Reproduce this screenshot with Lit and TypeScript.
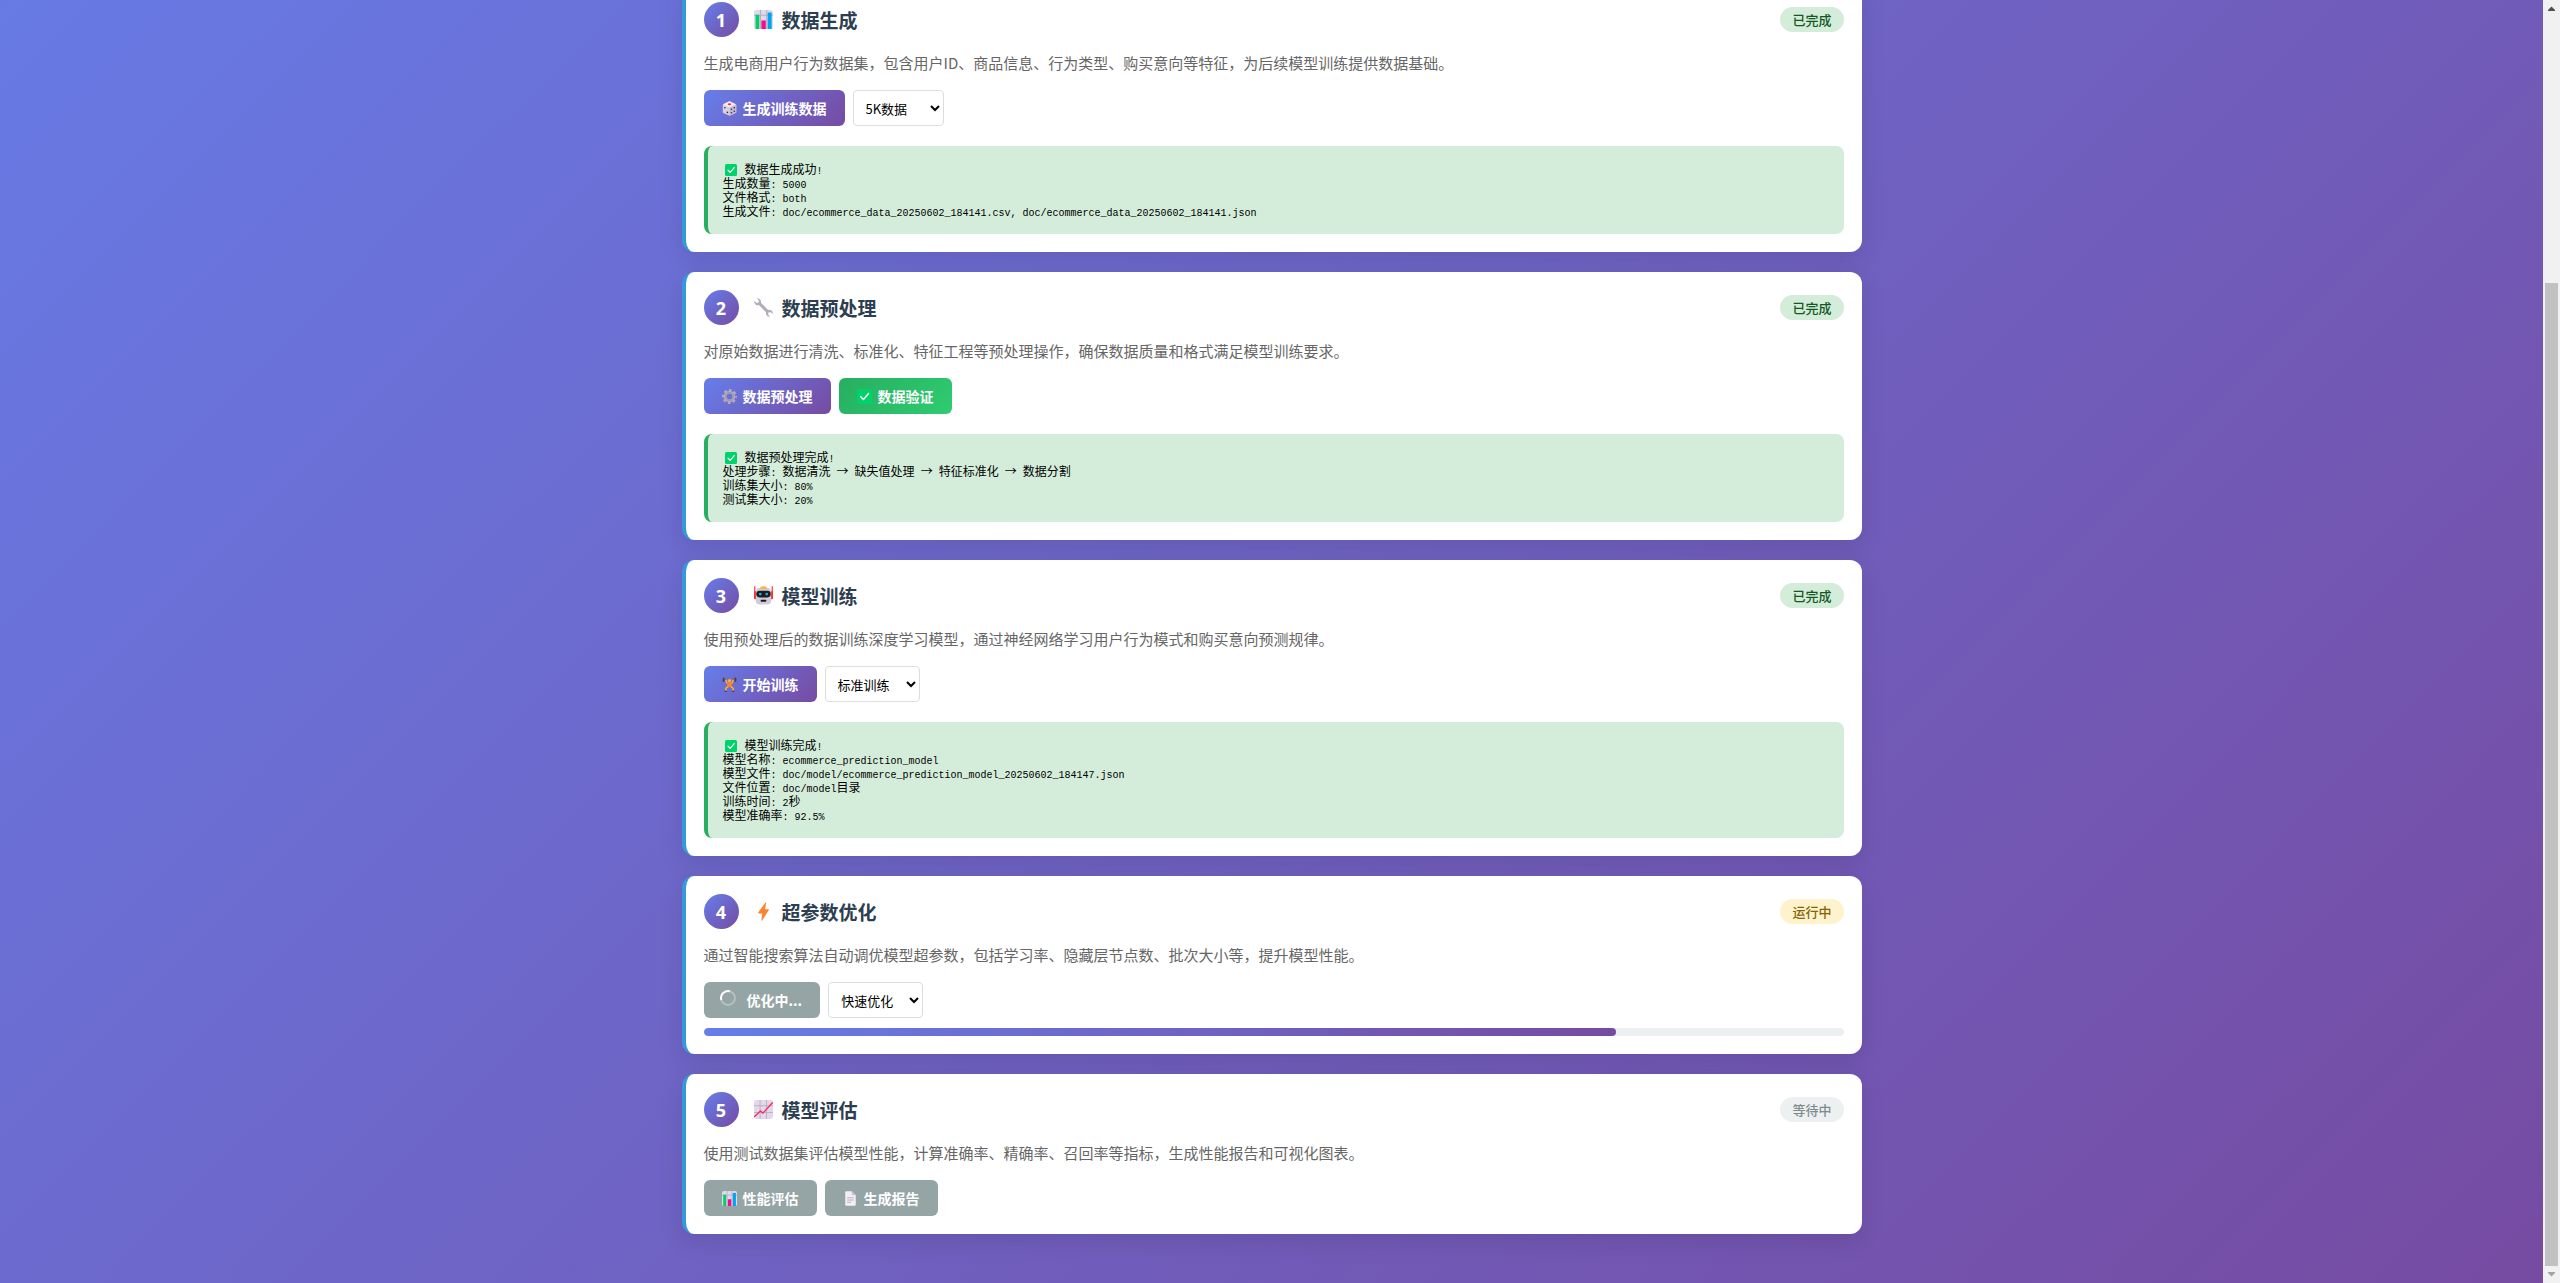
import { LitElement, html, css, svg, nothing, TemplateResult } from "lit";
import { customElement, property } from "lit/decorators.js";

type IconName = "bars" | "wrench" | "robot" | "bolt" | "trend" | "dice" | "gear" | "check" | "lifter" | "page" | "spinner";
type Status = "completed" | "running" | "waiting";

interface Action {
  label: string;
  icon: IconName;
  kind?: "primary" | "success";
  disabled?: boolean;
}

interface Step {
  title: string;
  icon: IconName;
  status: Status;
  desc: string;
  actions: Action[];
  select?: { label: string; value: string; options: string[] };
  output?: string[];
  progress?: number;
}

const STATUS_TEXT: Record<Status, string> = {
  completed: "已完成",
  running: "运行中",
  waiting: "等待中",
};

const STEPS: Step[] = [
  {
    title: "数据生成",
    icon: "bars",
    status: "completed",
    desc: "生成电商用户行为数据集，包含用户ID、商品信息、行为类型、购买意向等特征，为后续模型训练提供数据基础。",
    actions: [{ label: "生成训练数据", icon: "dice" }],
    select: { label: "数据规模", value: "5K数据", options: ["1K数据", "5K数据", "10K数据"] },
    output: [
      "数据生成成功!",
      "生成数量: 5000",
      "文件格式: both",
      "生成文件: doc/ecommerce_data_20250602_184141.csv, doc/ecommerce_data_20250602_184141.json",
    ],
  },
  {
    title: "数据预处理",
    icon: "wrench",
    status: "completed",
    desc: "对原始数据进行清洗、标准化、特征工程等预处理操作，确保数据质量和格式满足模型训练要求。",
    actions: [
      { label: "数据预处理", icon: "gear" },
      { label: "数据验证", icon: "check", kind: "success" },
    ],
    output: [
      "数据预处理完成!",
      "处理步骤: 数据清洗 → 缺失值处理 → 特征标准化 → 数据分割",
      "训练集大小: 80%",
      "测试集大小: 20%",
    ],
  },
  {
    title: "模型训练",
    icon: "robot",
    status: "completed",
    desc: "使用预处理后的数据训练深度学习模型，通过神经网络学习用户行为模式和购买意向预测规律。",
    actions: [{ label: "开始训练", icon: "lifter" }],
    select: { label: "训练模式", value: "标准训练", options: ["快速训练", "标准训练", "深度训练"] },
    output: [
      "模型训练完成!",
      "模型名称: ecommerce_prediction_model",
      "模型文件: doc/model/ecommerce_prediction_model_20250602_184147.json",
      "文件位置: doc/model目录",
      "训练时间: 2秒",
      "模型准确率: 92.5%",
    ],
  },
  {
    title: "超参数优化",
    icon: "bolt",
    status: "running",
    desc: "通过智能搜索算法自动调优模型超参数，包括学习率、隐藏层节点数、批次大小等，提升模型性能。",
    actions: [{ label: "优化中...", icon: "spinner", disabled: true }],
    select: { label: "优化模式", value: "快速优化", options: ["快速优化", "标准优化", "深度优化"] },
    progress: 80,
  },
  {
    title: "模型评估",
    icon: "trend",
    status: "waiting",
    desc: "使用测试数据集评估模型性能，计算准确率、精确率、召回率等指标，生成性能报告和可视化图表。",
    actions: [
      { label: "性能评估", icon: "bars", disabled: true },
      { label: "生成报告", icon: "page", disabled: true },
    ],
  },
];

const ICONS: Record<IconName, TemplateResult> = {
  bars: svg`
    <rect width="20" height="20" rx="2.5" fill="#e1d8ec"/>
    <path d="M0 5.5H20M6.8 0V20M13.4 0V20" stroke="#b4acbc" stroke-width="1" fill="none"/>
    <rect x="1.6" y="5" width="4" height="15" fill="#00d26a"/>
    <rect x="7.8" y="11" width="4.6" height="9" fill="#f70a8d"/>
    <rect x="14.4" y="2.6" width="4.2" height="17.4" fill="#00a6ed"/>`,
  wrench: svg`
    <path d="M5.6 5.6L14.6 14.6" stroke="#b4acbc" stroke-width="3.2"/>
    <path d="M3 .3Q6.400 .2 7.400 3Q8 5.600 6 7.200Q3.600 8.400 1.400 6.800Q0 5.400 .2 3.200L2.800 5.200L5 4.600V2.600Z" fill="#b4acbc"/>
    <path d="M17 19.700Q13.600 19.800 12.600 17Q12 14.400 14 12.800Q16.400 11.600 18.600 13.200Q20 14.600 19.800 16.800L17.200 14.800L15 15.400V17.400Z" fill="#b4acbc"/>`,
  robot: svg`
    <path d="M.8 .2V12M19.2 .2V12" stroke="#f8312f" stroke-width="1.2"/>
    <rect x="0" y="5.5" width="3" height="8.5" rx="1" fill="#f8312f"/>
    <rect x="17" y="5.5" width="3" height="8.5" rx="1" fill="#f8312f"/>
    <rect x="2" y="2" width="16" height="17.6" rx="4" fill="#d3c9dd"/>
    <path d="M6 2.800Q6.600 .2 10 .2T14 2.800Z" fill="#ffb02e"/>
    <rect x="2.4" y="5" width="15.2" height="7" rx="3.5" fill="#1c1c1c"/>
    <circle cx="6.6" cy="8.5" r="1.500" fill="#26a9dc"/>
    <circle cx="13.4" cy="8.5" r="1.500" fill="#26a9dc"/>
    <rect x="7" y="14.6" width="6" height="2" rx=".8" fill="#1c1c1c"/>`,
  bolt: svg`<path d="M12.2 .4Q12.8 .3 12.7 1L11.7 7.6H15Q16 7.8 15.5 8.8L8.6 19.4Q8 20 7.8 19.2L8.7 12H5Q4.200 11.700 4.600 10.800Z" fill="#ff822d"/>`,
  trend: svg`
    <rect width="20" height="20" rx="2.500" fill="#e1d8ec"/>
    <path d="M0 6H20M0 13.200H20M6.400 0V20M13.200 0V20" stroke="#b4acbc" stroke-width=".9" fill="none"/>
    <path d="M.6 17.400L6.800 11.600L9.400 13.800L19.400 3" stroke="#fb2b63" stroke-width="1.500" fill="none" stroke-linejoin="round" stroke-linecap="round"/>`,
  dice: svg`
    <path d="M10 .4L18.400 4.200Q19 4.600 19 5.400V14.600Q19 15.600 18.200 16L10 19.800L1.800 16Q1 15.600 1 14.600V5.400Q1 4.600 1.600 4.200Z" fill="#d8cfe0"/>
    <path d="M10 .4L18.400 4.400L10 8.600L1.600 4.400Z" fill="#f3eef8"/>
    <path d="M19 5V14.600Q19 15.600 18.200 16L10 19.800V8.600Z" fill="#c4b9ce"/>
    <ellipse cx="10" cy="4.400" rx="2.400" ry="1.300" fill="#f8312f"/>
    <circle cx="3.800" cy="9" r="1.100" fill="#3b2a50"/><circle cx="7.200" cy="15.200" r="1.100" fill="#3b2a50"/>
    <circle cx="12.600" cy="11" r="1.100" fill="#3b2a50"/><circle cx="16.400" cy="9" r="1.100" fill="#3b2a50"/>
    <circle cx="12.600" cy="15.600" r="1.100" fill="#3b2a50"/><circle cx="16.400" cy="13.600" r="1.100" fill="#3b2a50"/>`,
  gear: svg`
    <circle cx="10" cy="10" r="5.800" fill="none" stroke="#b4acbc" stroke-width="3.800"/>
    <circle cx="10" cy="10" r="8.600" fill="none" stroke="#b4acbc" stroke-width="2.600" stroke-dasharray="3.700 3.054" stroke-dashoffset="1.850"/>
    <circle cx="10" cy="10" r="5.400" fill="none" stroke="#998ea4" stroke-width="1"/>`,
  check: svg`
    <rect width="20" height="20" rx="2.500" fill="#00d26a"/>
    <path d="M5 10.200L8.600 14L15.400 6" stroke="#fff" stroke-width="2" fill="none" stroke-linecap="round" stroke-linejoin="round"/>`,
  lifter: svg`
    <path d="M0 3.500H20" stroke="#7d7385" stroke-width="1"/>
    <rect x="1" y=".6" width="1.800" height="6" rx=".8" fill="#4a3b50"/><rect x="3" y="1.400" width="1.400" height="4.600" fill="#5c4b63"/>
    <rect x="17.200" y=".6" width="1.800" height="6" rx=".8" fill="#4a3b50"/><rect x="15.600" y="1.400" width="1.400" height="4.600" fill="#5c4b63"/>
    <path d="M5 3.600L6.600 8L10 9L13.400 8L15 3.600" fill="none" stroke="#ffb02e" stroke-width="2" stroke-linejoin="round"/>
    <circle cx="10" cy="4.800" r="2.300" fill="#ffb02e"/>
    <path d="M6.600 7.400H13.400L12.800 13.800H7.200Z" fill="#ff822d"/>
    <path d="M7.800 12.800L4.800 15.200L5.800 18.400M12.200 12.800L15.200 15.200L14.200 18.400" fill="none" stroke="#ffb02e" stroke-width="2"/>
    <path d="M3.600 19.200H6.600M13.400 19.200H16.400" stroke="#4a3b50" stroke-width="1.500"/>`,
  page: svg`
    <path d="M3 1.500Q3 .4 4.200 .4H11.600L17 5.800V18.500Q17 19.600 15.800 19.600H4.200Q3 19.600 3 18.500Z" fill="#f3eef8"/>
    <path d="M11.600 .4L17 5.800H12.600Q11.600 5.800 11.600 4.800Z" fill="#cdc4d6"/>
    <path d="M5.600 9H14.400M5.600 12H14.400M5.600 15H11" stroke="#b4acbc" stroke-width="1.200"/>`,
  spinner: svg`
    <circle cx="10" cy="10" r="8.700" fill="none" stroke="#fff" stroke-opacity=".3" stroke-width="2.400"/>
    <path d="M1.700 12.600A8.700 8.700 0 0 1 12.200 1.600" fill="none" stroke="#fff" stroke-width="2.400"/>`,
};

const icon = (name: IconName) => html`<svg class="icon icon-${name}" viewBox="0 0 20 20" aria-hidden="true">${ICONS[name]}</svg>`;

/** Half-width characters take a smaller monospace so that two of them span one ideograph. */
const mixed = (line: string) =>
  (line.match(/[\x20-\x7e]+|[^\x20-\x7e]+/g) ?? []).map((run) =>
    /^[\x20-\x7e]/.test(run) ? html`<span class="half">${run}</span>` : run
  );

@customElement("step-card")
export class StepCard extends LitElement {
  @property({ attribute: false }) step!: Step;
  @property({ type: Number }) index = 1;

  static styles = css`
    :host {
      display: block;
      flex: none;
      padding: 18px;
      border-left: 4px solid #3498db;
      border-radius: 12px;
      background: #fff;
      box-shadow: 0 8px 25px rgba(0, 0, 0, 0.1);
    }
    .head {
      display: flex;
      align-items: center;
      gap: 15px;
      margin-bottom: 14px;
    }
    .number {
      display: grid;
      place-items: center;
      width: 35px;
      height: 35px;
      border-radius: 50%;
      color: #fff;
      font: bold 18px/1 "Noto Sans", sans-serif;
      background: linear-gradient(135deg, #667eea, #764ba2);
    }
    .title {
      display: flex;
      align-items: center;
      gap: 9px;
      flex: 1;
      margin: 0;
      color: #2c3e50;
      font-size: 19px;
      line-height: 26px;
      font-weight: 700;
    }
    .icon {
      flex: none;
      display: block;
      width: 15px;
      height: 15px;
    }
    .title .icon {
      width: 19px;
      height: 19px;
    }
    .status {
      padding: 0 12px;
      border-radius: 15px;
      font-size: 13px;
      line-height: 25px;
      font-weight: 500;
    }
    .completed { background: #d4edda; color: #155724; }
    .running { background: #fff3cd; color: #856404; }
    .waiting { background: #ecf0f1; color: #7f8c8d; }
    .desc {
      margin: 0 0 16px;
      color: #666;
      font-size: 15px;
      line-height: 23px;
    }
    .actions {
      display: flex;
      flex-wrap: wrap;
      gap: 8px;
    }
    button {
      display: flex;
      align-items: center;
      gap: 6px;
      height: 36px;
      padding: 0 18px;
      border: 0;
      border-radius: 6px;
      color: #fff;
      font-family: inherit;
      font-size: 14px;
      font-weight: 700;
      cursor: pointer;
      background: linear-gradient(135deg, #667eea, #764ba2);
    }
    button.success { background: linear-gradient(135deg, #27ae60, #2ecc71); }
    button:disabled { background: #95a5a6; cursor: not-allowed; }
    button .icon-spinner {
      width: 16px;
      height: 16px;
      margin: 0 5px 4px -2px;
    }
    select {
      height: 36px;
      padding: 0 12px 0 8px;
      border: 1px solid #ddd;
      border-radius: 4px;
      color: #000;
      background: #fff;
      font-family: inherit;
      font-size: 13px;
    }
    .output {
      margin-top: 20px;
      padding: 16px 15px;
      border-left: 4px solid #27ae60;
      border-radius: 8px;
      background: #d4edda;
      color: #000;
      font-size: 12px;
      line-height: 14px;
    }
    .line { white-space: pre-wrap; height: 14px; }
    .line .icon {
      display: inline-block;
      width: 12px;
      height: 12px;
      margin: 0 2px;
      vertical-align: -2px;
    }
    .half {
      font-family: "Liberation Mono", monospace;
      font-size: 10px;
    }
    .track {
      height: 8px;
      margin-top: 10px;
      border-radius: 4px;
      overflow: hidden;
      background: #ecf0f1;
    }
    .fill {
      height: 100%;
      border-radius: 4px;
      background: linear-gradient(90deg, #667eea, #764ba2);
    }
  `;

  render() {
    const s = this.step;
    return html`
      <div class="head">
        <div class="number">${this.index}</div>
        <h3 class="title">${icon(s.icon)}<span>${s.title}</span></h3>
        <div class="status ${s.status}">${STATUS_TEXT[s.status]}</div>
      </div>
      <p class="desc">${s.desc}</p>
      <div class="actions">
        ${s.actions.map(
          (a) => html`<button type="button" class=${a.kind ?? "primary"} ?disabled=${a.disabled}>${icon(a.icon)}<span>${a.label}</span></button>`
        )}
        ${s.select
          ? html`<select aria-label=${s.select.label}>
              ${s.select.options.map((o) => html`<option ?selected=${o === s.select!.value}>${o}</option>`)}
            </select>`
          : nothing}
      </div>
      ${s.progress !== undefined
        ? html`<div class="track" role="progressbar" aria-label=${s.title} aria-valuenow=${s.progress} aria-valuemin="0" aria-valuemax="100">
            <div class="fill" style="width:${s.progress}%"></div>
          </div>`
        : nothing}
      ${s.output
        ? html`<div class="output">
            ${s.output.map((l, i) => html`<div class="line">${i === 0 ? html`${icon("check")}${mixed(" ")}` : nothing}${mixed(l)}</div>`)}
          </div>`
        : nothing}
    `;
  }
}

@customElement("page-scrollbar")
export class PageScrollbar extends LitElement {
  /** Height of the window and of the whole page, in the same unit. */
  @property({ type: Number }) view = 1;
  @property({ type: Number }) total = 1;

  static styles = css`
    :host {
      display: flex;
      flex-direction: column;
      flex: none;
      width: 17px;
      background: #f1f1f1;
    }
    .arrow {
      display: block;
      width: 17px;
      height: 17px;
    }
    .rail {
      flex: 1;
      display: flex;
      flex-direction: column;
      justify-content: flex-end;
      padding: 0 2px;
    }
    .thumb { background: #c1c1c1; }
  `;

  render() {
    return html`
      <svg class="arrow" viewBox="0 0 17 17" aria-hidden="true"><path d="M5 11V10L8.500 6.500L12 10V11Z" fill="#505050"/></svg>
      <div class="rail"><div class="thumb" style="height:${(100 * this.view) / this.total}%"></div></div>
      <svg class="arrow" viewBox="0 0 17 17" aria-hidden="true"><path d="M5 6V7L8.500 10.500L12 7V6Z" fill="#a3a3a3"/></svg>
    `;
  }
}

@customElement("app-root")
export class AppRoot extends LitElement {
  static styles = css`
    :host {
      display: flex;
      height: 100vh;
      overflow: hidden;
      font-family: "Noto Sans CJK SC", sans-serif;
    }
    .page {
      flex: 1;
      display: flex;
      flex-direction: column;
      justify-content: flex-end;
      align-items: center;
      overflow: hidden;
      padding: 0 20px 49px;
      background: linear-gradient(135deg, #667eea, #764ba2) bottom / 100% 127%;
    }
    .steps {
      flex: none;
      display: flex;
      flex-direction: column;
      gap: 20px;
      width: 100%;
      max-width: 1180px;
    }
  `;

  render() {
    return html`
      <main class="page">
        <div class="steps">${STEPS.map((s, i) => html`<step-card .step=${s} .index=${i + 1}></step-card>`)}</div>
      </main>
      <page-scrollbar .view=${1283} .total=${1630}></page-scrollbar>
    `;
  }
}
